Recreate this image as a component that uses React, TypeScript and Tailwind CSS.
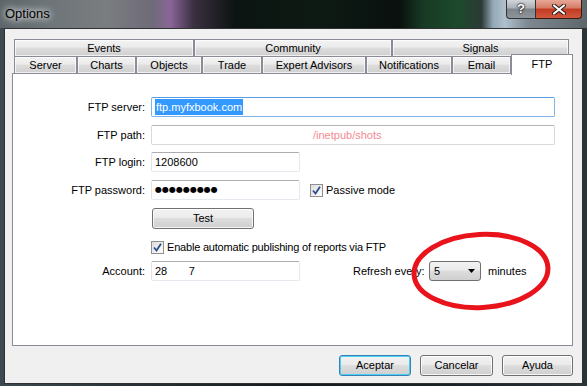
import React from "react"

const font = "font-['Liberation_Sans',Arial,sans-serif]"

function Tab({ label, w, active }: { label: string; w: string; active?: boolean }) {
  if (active) {
    return (
      <div
        className={`${w} relative z-10 -mb-px h-[21px] border border-b-0 border-[#898c95] bg-white text-center text-[11px] leading-[18px] text-black`}
      >
        {label}
      </div>
    )
  }
  return (
    <div
      className={`${w} h-[18px] border border-[#898c95] bg-[linear-gradient(#f3f3f3,#ebebeb_45%,#dddddd_50%,#cfcfcf)] text-center text-[11px] leading-[16px] text-black shadow-[inset_0_0_0_1px_rgba(255,255,255,0.7)]`}
    >
      {label}
    </div>
  )
}

function Checkbox() {
  return (
    <div className="flex h-[13px] w-[13px] items-center justify-center border border-[#8e8f8f] bg-[linear-gradient(135deg,#dcdcdc,#ffffff)]">
      <svg width="9" height="9" viewBox="0 0 9 9">
        <path d="M1 4.5 L3.5 7.5 L8 0.8" fill="none" stroke="#2c4f8c" strokeWidth="1.8" />
      </svg>
    </div>
  )
}

function Btn({ label, w, def }: { label: string; w: string; def?: boolean }) {
  return (
    <div
      className={`${w} h-[21px] rounded-[3px] border ${
        def ? "border-[#3c7fb1] shadow-[inset_0_0_0_1px_#48d1f4]" : "border-[#707070] shadow-[inset_0_0_0_1px_rgba(255,255,255,0.8)]"
      } bg-[linear-gradient(#f2f2f2,#ebebeb_45%,#dddddd_50%,#cfcfcf)] text-center text-[11px] leading-[19px] text-black`}
    >
      {label}
    </div>
  )
}

function Input({ w, children, blue, dim }: { w: string; children?: React.ReactNode; blue?: boolean; dim?: boolean }) {
  const border = blue
    ? "border-[#7eb4ea] border-t-[#569de5]"
    : dim
      ? "border-[#d9d9d9] border-t-[#b5b5b5]"
      : "border-[#e3e9ef] border-t-[#abadb3] border-l-[#e2e3ea]"
  return (
    <div className={`${w} flex h-[20px] items-center overflow-hidden rounded-[2px] border bg-white px-[3px] text-[11px] text-black ${border}`}>
      {children}
    </div>
  )
}

function Label({ text }: { text: string }) {
  return <div className="w-[133px] pr-px text-right text-[11px] text-black">{text}</div>
}

export default function App() {
  return (
    <div
      className={`${font} relative h-[386px] w-[587px] overflow-hidden bg-[linear-gradient(90deg,#3d4a50,#2a3438_20%,#15191c_50%,#1b2428_80%,#2c3438)]`}
    >
      {/* title bar */}
      <div className="flex h-[28px] items-start bg-[linear-gradient(90deg,#5d666a,#6d7478_8%,#7a7d80_18%,#6f6a78_26%,#8a6698_29%,#3a3040_33%,#0c1411_40%,#0d1a14_55%,#0a100e_68%,#173a24_72%,#1d4a2c_78%,#2c3a36_82%,#93a8b8_84%,#b0c0cc_86%,#7d8890_90%,#5d666a)]">
        <div className="pl-[5px] text-[13px] leading-[28px] text-black [text-shadow:0_0_6px_#fff,0_0_10px_#fff]">Options</div>
        <div className="ml-auto mr-[5px] flex">
          <div className="flex h-[19px] w-[30px] items-center justify-center rounded-bl-[4px] border border-t-0 border-[#2c3236] bg-[linear-gradient(#d2d6da,#a8aeb4_45%,#7c848a_50%,#8e969c)] text-[13px] font-bold text-white [text-shadow:0_0_2px_#000,0_0_2px_#000]">
            ?
          </div>
          <div className="flex h-[19px] w-[46px] items-center justify-center rounded-br-[4px] border border-l-0 border-t-0 border-[#3a1a14] bg-[linear-gradient(#e8a898,#d47a64_45%,#c23a22_50%,#d0583c)]">
            <svg width="14" height="11" viewBox="0 0 14 11">
              <path d="M2 1.5 L12 9.5 M12 1.5 L2 9.5" stroke="#2a1a16" strokeWidth="4" strokeLinecap="round" />
              <path d="M2 1.5 L12 9.5 M12 1.5 L2 9.5" stroke="#ffffff" strokeWidth="2.2" strokeLinecap="round" />
            </svg>
          </div>
        </div>
      </div>

      {/* client area */}
      <div className="ml-[4px] h-[356px] w-[579px] border border-[#2e3235] bg-[#f0f0f0]">
        <div className="pl-[7px] pt-[10px]">
          <div className="w-[561px]">
            <div className="flex pl-[2px]">
              <Tab label="Events" w="w-[180px]" />
              <Tab label="Community" w="w-[198px]" />
              <Tab label="Signals" w="w-[177px]" />
            </div>
            <div className="-mt-px flex h-[18px] items-end pl-[2px]">
              <Tab label="Server" w="w-[63px]" />
              <Tab label="Charts" w="w-[59px]" />
              <Tab label="Objects" w="w-[66px]" />
              <Tab label="Trade" w="w-[60px]" />
              <Tab label="Expert Advisors" w="w-[104px]" />
              <Tab label="Notifications" w="w-[86px]" />
              <Tab label="Email" w="w-[59px]" />
              <Tab label="FTP" w="w-[62px]" active />
            </div>

            {/* panel */}
            <div className="-mt-px h-[273px] border border-[#898c95] bg-white">
              <div className="mt-[23px] flex items-center">
                <Label text="FTP server:" />
                <div className="ml-[5px]">
                  <Input w="w-[404px]" blue>
                    <span className="bg-[#3399ff] px-px text-white">ftp.myfxbook.com</span>
                  </Input>
                </div>
              </div>
              <div className="mt-[8px] flex items-center">
                <Label text="FTP path:" />
                <div className="ml-[5px]">
                  <Input w="w-[404px]" dim>
                    <span className="pl-[158px] text-[#f58a92]">/inetpub/shots</span>
                  </Input>
                </div>
              </div>
              <div className="mt-[7px] flex items-center">
                <Label text="FTP login:" />
                <div className="ml-[5px]">
                  <Input w="w-[149px]">1208600</Input>
                </div>
              </div>
              <div className="mt-[8px] flex items-center">
                <Label text="FTP password:" />
                <div className="ml-[5px]">
                  <Input w="w-[149px]">
                    <span className="font-['DejaVu_Sans',sans-serif] text-[8px] leading-none">●●●●●●●●●</span>
                  </Input>
                </div>
                <div className="ml-[10px] flex items-center">
                  <Checkbox />
                  <span className="ml-[3px] text-[11px] text-black">Passive mode</span>
                </div>
              </div>
              <div className="ml-[139px] mt-[8px]">
                <Btn label="Test" w="w-[102px]" />
              </div>
              <div className="ml-[138px] mt-[12px] flex h-[13px] items-center">
                <Checkbox />
                <span className="ml-[3px] whitespace-nowrap text-[11px] tracking-[-0.2px] text-black">
                  Enable automatic publishing of reports via FTP
                </span>
              </div>
              <div className="mt-[7px] flex items-center">
                <Label text="Account:" />
                <div className="ml-[5px]">
                  <Input w="w-[149px]">
                    <span className="whitespace-pre">28       7</span>
                  </Input>
                </div>
                <div className="ml-[53px] w-[76px] whitespace-nowrap text-[11px] text-black">Refresh every:</div>
                <div className="flex h-[20px] w-[52px] items-center justify-between rounded-[3px] border border-[#707070] bg-[linear-gradient(#f2f2f2,#ebebeb_45%,#dddddd_50%,#cfcfcf)] px-[4px] text-[11px] text-black">
                  <span>5</span>
                  <svg width="8" height="5" viewBox="0 0 8 5">
                    <path d="M0 0 H7 L3.5 4 Z" fill="#000" />
                  </svg>
                </div>
                <div className="ml-[7px] text-[11px] text-black">minutes</div>
              </div>
            </div>
          </div>
        </div>

        <div className="mt-[9px] flex justify-end gap-[9px] pr-[9px]">
          <Btn label="Aceptar" w="w-[72px]" def />
          <Btn label="Cancelar" w="w-[73px]" />
          <Btn label="Ayuda" w="w-[71px]" />
        </div>
      </div>

      {/* red annotation */}
      <svg className="absolute left-[408px] top-[230px]" width="146" height="82" viewBox="0 0 146 82">
        <ellipse cx="73" cy="41" rx="67" ry="36.5" fill="none" stroke="#e8131b" strokeWidth="5" transform="rotate(-3 73 41)" />
      </svg>
    </div>
  )
}
